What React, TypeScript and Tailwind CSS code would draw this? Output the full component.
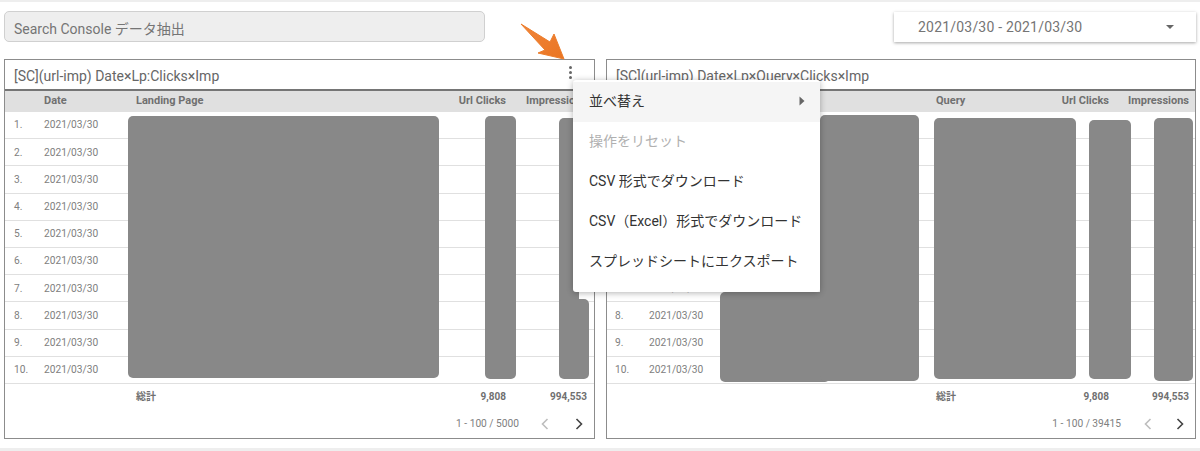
const font = { fontFamily: '"Roboto", "Noto Sans CJK JP", sans-serif' };

// redacted blocks, coordinates relative to the panel they cover
const leftBlocks = [
  "left-[123px] top-[56px] w-[311px] h-[262px]",
  "left-[480px] top-[56px] w-[31px] h-[263px]",
  "left-[554px] top-[58px] w-[20px] h-[240px]",
  "left-[554px] top-[239px] w-[30px] h-[80px]",
];

const rightBlocks = [
  "left-[113px] top-[232px] w-[110px] h-[90px]",
  "left-[213px] top-[55px] w-[99px] h-[266px]",
  "left-[327px] top-[58px] w-[142px] h-[261px]",
  "left-[482px] top-[60px] w-[42px] h-[259px]",
  "left-[547px] top-[58px] w-[39px] h-[263px]",
];

const rows = [1, 2, 3, 4, 5, 6, 7, 8, 9, 10];

function Chevron({ dir, muted }: { dir: "left" | "right"; muted?: boolean }) {
  return (
    <svg width="12" height="14" viewBox="0 0 12 14" fill="none">
      <path
        d={dir === "left" ? "M8.5 2 3.5 7l5 5" : "M3.5 2l5 5-5 5"}
        stroke={muted ? "#bdbdbd" : "#444"}
        strokeWidth="1.6"
      />
    </svg>
  );
}

function LeftPanel() {
  return (
    <div className="relative w-[591px] h-[380px] border border-[#8c8c8c] bg-white flex flex-col">
      <div className="h-[29px] flex items-center pl-[9px] pt-[3px] text-[14px] text-[#666]">
        [SC](url-imp) Date×Lp:Clicks×Imp
      </div>
      <div className="h-[23px] border-t-2 border-[#757575] bg-[#e0e0e0] flex items-center pl-[9px] pr-[7px] text-[11px] font-bold text-[#707070]">
        <div className="w-[30px]"></div>
        <div className="w-[92px]">Date</div>
        <div className="flex-1">Landing Page</div>
        <div className="w-[70px] text-right">Url Clicks</div>
        <div className="w-[81px] whitespace-nowrap text-right">Impressions</div>
      </div>
      {rows.map((n) => (
        <div key={n} className="h-[27.2px] shrink-0 border-b border-[#e0e0e0] flex items-center pl-[9px] text-[10.2px] text-[#808080]">
          <div className="w-[30px]">{n}.</div>
          <div>2021/03/30</div>
        </div>
      ))}
      <div className="h-[26px] flex items-center text-[10px] font-bold text-[#707070] pl-[131px] pr-[7px]">
        <div className="flex-1">総計</div>
        <div className="w-[70px] text-right">9,808</div>
        <div className="w-[81px] text-right">994,553</div>
      </div>
      <div className="flex-1 flex items-center justify-end gap-[22px] pr-[9px] text-[10.2px] text-[#808080]">
        <span className="-mr-[2px]">1 - 100 / 5000</span>
        <Chevron dir="left" muted />
        <Chevron dir="right" />
      </div>
      {leftBlocks.map((c) => (
        <div key={c} className={`absolute rounded-[5px] bg-[#888888] ${c}`}></div>
      ))}
    </div>
  );
}

function RightPanel() {
  return (
    <div className="relative w-[590px] h-[380px] border border-[#8c8c8c] bg-white flex flex-col">
      <div className="h-[29px] flex items-center pl-[9px] pt-[3px] text-[14px] text-[#666]">
        [SC](url-imp) Date×Lp×Query×Clicks×Imp
      </div>
      <div className="h-[23px] border-t-2 border-[#757575] bg-[#e0e0e0] flex items-center pl-[8px] pr-[6px] text-[11px] font-bold text-[#707070]">
        <div className="w-[34px]"></div>
        <div className="w-[92px]">Date</div>
        <div className="w-[195px]">Landing Page</div>
        <div className="flex-1">Query</div>
        <div className="w-[70px] text-right">Url Clicks</div>
        <div className="w-[80px] text-right">Impressions</div>
      </div>
      {rows.map((n) => (
        <div key={n} className="h-[27.2px] shrink-0 border-b border-[#e0e0e0] flex items-center pl-[8px] text-[10.2px] text-[#808080]">
          <div className="w-[34px]">{n}.</div>
          <div>2021/03/30</div>
        </div>
      ))}
      <div className="h-[26px] flex items-center text-[10px] font-bold text-[#707070] pl-[329px] pr-[6px]">
        <div className="flex-1">総計</div>
        <div className="w-[70px] text-right">9,808</div>
        <div className="w-[80px] text-right">994,553</div>
      </div>
      <div className="flex-1 flex items-center justify-end gap-[20px] pr-[9px] text-[10.2px] text-[#808080]">
        <span className="mr-[1px]">1 - 100 / 39415</span>
        <Chevron dir="left" muted />
        <Chevron dir="right" />
      </div>
      {rightBlocks.map((c) => (
        <div key={c} className={`absolute rounded-[5px] bg-[#888888] ${c}`}></div>
      ))}
    </div>
  );
}

function Menu() {
  return (
    <div className="absolute left-[573px] top-[80px] w-[247px] h-[212px] pt-[2px] rounded-[3px] bg-white shadow-[0_1px_6px_rgba(0,0,0,0.3)] text-[14px] text-[#333]">
      <div className="h-[40px] pb-[2px] bg-[#f5f5f5] flex items-center justify-between pl-[16px] pr-[15px]">
        <span>並べ替え</span>
        <svg width="6" height="10" viewBox="0 0 6 10">
          <path d="M0.5 0.5 5.5 5 0.5 9.5z" fill="#666" />
        </svg>
      </div>
      <div className="h-[40px] pb-[2px] flex items-center pl-[16px] text-[#b0b0b0]">操作をリセット</div>
      <div className="h-[40px] pb-[2px] flex items-center pl-[16px]">CSV 形式でダウンロード</div>
      <div className="h-[40px] pb-[2px] flex items-center pl-[16px]">CSV（Excel）形式でダウンロード</div>
      <div className="h-[40px] pb-[2px] flex items-center pl-[16px]">スプレッドシートにエクスポート</div>
    </div>
  );
}

export default function App() {
  return (
    <div className="relative w-[1200px] h-[451px] overflow-hidden bg-white flex flex-col" style={font}>
      <div className="h-[2px] bg-[#eeeeee]"></div>

      <div className="h-[57px] flex items-start justify-between pl-[4px] pr-[4px] pt-[9px]">
        <div className="w-[481px] h-[31px] rounded-[5px] border border-[#d0d0d0] bg-[#eeeeee] flex items-center pl-[9px] pt-[6px] text-[14px] text-[#757575]">
          Search Console データ抽出
        </div>
        <div className="w-[302px] h-[30px] mt-[1px] bg-white shadow-[0_1px_3px_rgba(0,0,0,0.35)] flex items-center justify-between pl-[24px] pr-[22px] text-[14px] text-[#757575]">
          <span className="tracking-[0.2px]">2021/03/30 - 2021/03/30</span>
          <svg width="8" height="4" viewBox="0 0 8 4">
            <path d="M0 0h8L4 4z" fill="#666" />
          </svg>
        </div>
      </div>

      <div className="flex gap-[11px] pl-[4px]">
        <LeftPanel />
        <RightPanel />
      </div>

      <div className="mt-auto h-[3px] bg-[#eeeeee]"></div>

      {/* 3-dot trigger of the open menu */}
      <div className="absolute left-[569px] top-[66px] flex flex-col gap-[2px]">
        <div className="w-[3px] h-[3px] rounded-full bg-[#666]"></div>
        <div className="w-[3px] h-[3px] rounded-full bg-[#666]"></div>
        <div className="w-[3px] h-[3px] rounded-full bg-[#666]"></div>
      </div>

      <Menu />

      {/* annotation arrow */}
      <svg className="absolute left-[515px] top-[20px]" width="60" height="50" viewBox="515 20 60 50">
        <defs>
          <linearGradient id="arrowFill" x1="0" y1="0" x2="1" y2="1">
            <stop offset="0" stopColor="#f0853a" />
            <stop offset="1" stopColor="#ea7522" />
          </linearGradient>
        </defs>
        <path d="M521 24 550 42 554 34 564 59 538 53 545 50z" fill="url(#arrowFill)" stroke="#ed7d2b" strokeWidth="1" strokeLinejoin="round" />
      </svg>
    </div>
  );
}
